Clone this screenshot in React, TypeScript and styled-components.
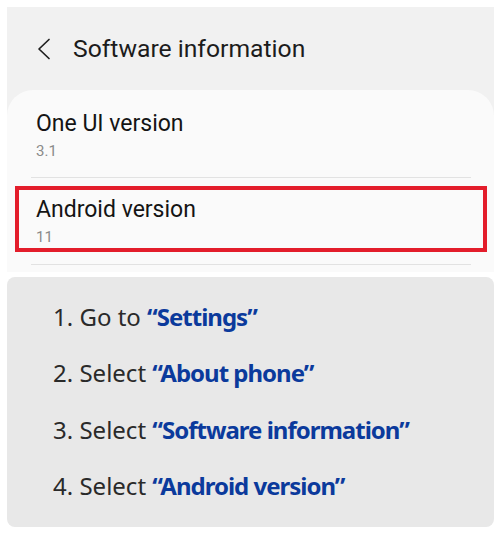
import styled, { createGlobalStyle } from "styled-components"

const GlobalStyle = createGlobalStyle`
  html, body {
    margin: 0;
    padding: 0;
    background: #ffffff;
  }
`

type Item = { label: string; value: string; highlighted?: boolean }

const items: Item[] = [
  { label: "One UI version", value: "3.1" },
  { label: "Android version", value: "11", highlighted: true },
]

const steps = [
  { action: "Go to", target: "Settings" },
  { action: "Select", target: "About phone" },
  { action: "Select", target: "Software information" },
  { action: "Select", target: "Android version" },
]

export default function App() {
  return (
    <Page>
      <GlobalStyle />
      <Screen>
        <Header>
          <BackButton aria-label="Back">
            <svg width="14" height="22" viewBox="0 0 14 22" fill="none">
              <polyline
                points="12,1.5 2,11 12,20.5"
                stroke="#1f1f1f"
                strokeWidth="1.7"
                strokeLinecap="round"
                strokeLinejoin="round"
              />
            </svg>
          </BackButton>
          <Title>Software information</Title>
        </Header>

        <Card>
          {items.map((item) => (
            <div key={item.label}>
              <Row $highlighted={item.highlighted}>
                <RowLabel>{item.label}</RowLabel>
                <RowValue>{item.value}</RowValue>
              </Row>
              <Divider />
            </div>
          ))}
        </Card>
      </Screen>

      <Steps>
        {steps.map((step, i) => (
          <Step key={step.target}>
            {i + 1}. {step.action} <Target>“{step.target}”</Target>
          </Step>
        ))}
      </Steps>
    </Page>
  )
}

const Page = styled.div`
  width: 487px;
  padding: 7px 6px 6px 7px;
  display: flex;
  flex-direction: column;
  gap: 5px;
  font-family: Roboto, "Liberation Sans", sans-serif;
`

const Screen = styled.div`
  background: #f1f1f1;
`

const Header = styled.header`
  height: 83px;
  box-sizing: border-box;
  padding: 27px 0 0 30px;
  display: flex;
  align-items: flex-start;
  gap: 22px;
`

const BackButton = styled.div`
  width: 14px;
  height: 22px;
  margin-top: 4px;
  display: flex;
`

const Title = styled.h1`
  margin: 0;
  font-size: 24.7px;
  line-height: 30px;
  font-weight: 400;
  color: #1c1c1c;
`

const Card = styled.section`
  background: #fafafa;
  border-radius: 26px 26px 0 0;
  padding-bottom: 7px;
`

const Row = styled.div<{ $highlighted?: boolean }>`
  display: flex;
  flex-direction: column;
  gap: 3px;
  ${(p) =>
    p.$highlighted
      ? `
    margin: 8px 7px 12px 8px;
    border: 4px solid #e31d2b;
    padding: 6px 0 1px 17px;
  `
      : `
    padding: 20px 0 16px 29px;
  `}
`

const RowLabel = styled.div`
  font-size: 23px;
  line-height: 28px;
  color: #141414;
`

const RowValue = styled.div`
  font-size: 15px;
  line-height: 20px;
  color: #8a8a8a;
`

const Divider = styled.hr`
  margin: 0 23px 0 24px;
  border: none;
  height: 1px;
  background: #e2e2e2;
`

const Steps = styled.ol`
  margin: 0;
  list-style: none;
  background: #e8e8e8;
  border-radius: 8px;
  height: 250px;
  box-sizing: border-box;
  padding: 12px 0 0 46px;
  font-family: "Noto Sans", "Open Sans", sans-serif;
`

const Step = styled.li`
  font-size: 24px;
  line-height: 56.4px;
  color: #2a2a2a;
`

const Target = styled.span`
  font-weight: 700;
  letter-spacing: -1px;
  color: #0b3a9c;
`
